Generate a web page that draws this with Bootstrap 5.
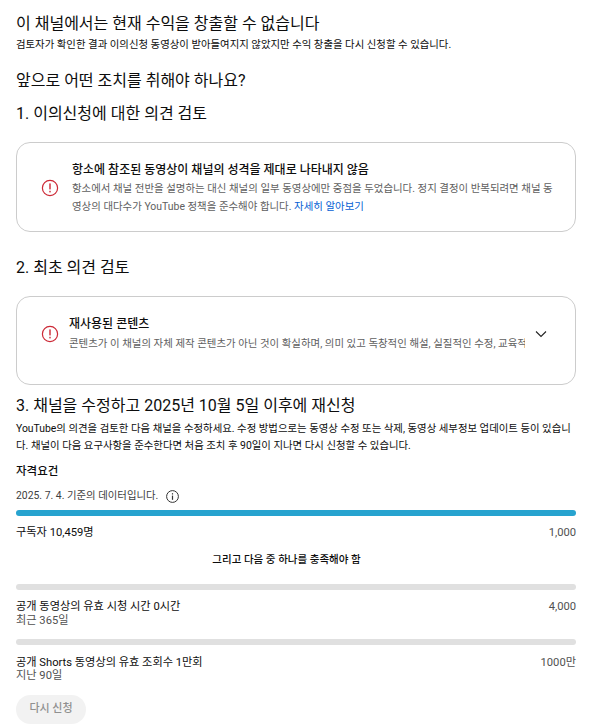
<!DOCTYPE html>
<html lang="ko">
<head>
<meta charset="utf-8">
<title>수익 창출</title>
<link href="https://cdn.jsdelivr.net/npm/bootstrap@5.3.0/dist/css/bootstrap.min.css" rel="stylesheet">
<style>
html,body{height:728px;overflow:hidden;background:#fff}
body{font-family:Roboto,"Noto Sans CJK KR",sans-serif;color:#0d0d0d;padding:13px 13px 0 16px;font-size:10.4px;line-height:16px}
.head-l{font-size:16px;line-height:22px;font-weight:400;margin:0}
.sub-t{font-size:10.4px;line-height:16px;margin:2px 0 0}
.para-t{font-size:10.4px;line-height:16.5px;margin:4px 0 0}
.m-next{margin-top:17px}
.m-one{margin-top:11px}
.m-two{margin-top:25px}
.m-three{margin-top:10px}
.rev-card{border:1px solid #ccc;border-radius:14px;background:#fff}
.card-a{height:90px;margin-top:17px;padding:2px 16px 0 24px}
.card-b{height:89px;margin-top:17px;padding:0 28px 14px 24px}
.card-t{font-size:12px;line-height:18px;font-weight:500;margin:0}
.card-d{color:#606060;font-size:10.45px;line-height:17.5px;margin:1px 0 0}
.card-d2{line-height:18px;margin-top:2px}
.clip-line{white-space:nowrap;overflow:hidden}
.ico-s{flex:0 0 18px;width:18px;height:18px}
.chev{flex:0 0 12px}
.gap-a{gap:13px}
.gap-b{gap:10px}
.body-b{min-width:0}
.link-b{color:#065fd4;text-decoration:none}
.bar-f{height:6px;border-radius:3px;background:#e0e0e0}
.bar-on{background:#27a3cf;margin-top:6px}
.bar-2{margin-top:16px}
.bar-3{margin-top:10px}
.label-b{font-size:11.5px;font-weight:500;line-height:18px;margin:8px 0 0}
.date-line{color:#404040;margin-top:8px;height:16px;gap:8px}
.muted-t{color:#505050}
.row-t{font-size:11.2px;line-height:15.5px}
.row-1{margin-top:9px}
.row-2{margin-top:9px}
.row-3{margin-top:10px}
.row-s{margin-top:-1px}
.row-s2{margin-top:-2px}
.row-c{font-size:10.5px;line-height:16px;font-weight:500;margin:11px 19px 0 0}
.retry{background:#f2f2f2;color:#909090;border:0;border-radius:15px;width:70px;height:29px;font-size:11px;font-weight:500;padding:0;margin-top:11px}
.retry:disabled{background:#f2f2f2;color:#909090;opacity:1}
</style>
</head>
<body>
<h1 class="head-l">이 채널에서는 현재 수익을 창출할 수 없습니다</h1>
<p class="sub-t">검토자가 확인한 결과 이의신청 동영상이 받아들여지지 않았지만 수익 창출을 다시 신청할 수 있습니다.</p>
<h2 class="head-l m-next">앞으로 어떤 조치를 취해야 하나요?</h2>
<h2 class="head-l m-one">1. 이의신청에 대한 의견 검토</h2>
<div class="rev-card card-a d-flex align-items-center gap-a">
  <svg class="ico-s" viewBox="0 0 18 18"><circle cx="9" cy="9" r="7.6" fill="none" stroke="#cc2936" stroke-width="1.2"/><rect x="8.3" y="4.4" width="1.4" height="6" fill="#cc2936"/><rect x="8.3" y="11.8" width="1.4" height="1.6" fill="#cc2936"/></svg>
  <div class="flex-grow-1">
    <p class="card-t">항소에 참조된 동영상이 채널의 성격을 제대로 나타내지 않음</p>
    <p class="card-d">항소에서 채널 전반을 설명하는 대신 채널의 일부 동영상에만 중점을 두었습니다. 정지 결정이 반복되려면 채널 동영상의 대다수가 YouTube 정책을 준수해야 합니다. <a class="link-b" href="#">자세히 알아보기</a></p>
  </div>
</div>
<h2 class="head-l m-two">2. 최초 의견 검토</h2>
<div class="rev-card card-b d-flex align-items-center gap-b">
  <svg class="ico-s" viewBox="0 0 18 18"><circle cx="9" cy="9" r="7.6" fill="none" stroke="#cc2936" stroke-width="1.2"/><rect x="8.3" y="4.4" width="1.4" height="6" fill="#cc2936"/><rect x="8.3" y="11.8" width="1.4" height="1.6" fill="#cc2936"/></svg>
  <div class="flex-grow-1 body-b">
    <p class="card-t">재사용된 콘텐츠</p>
    <p class="card-d card-d2 clip-line">콘텐츠가 이 채널의 자체 제작 콘텐츠가 아닌 것이 확실하며, 의미 있고 독창적인 해설, 실질적인 수정, 교육적 가치를 더하지 않았습니다.</p>
  </div>
  <svg class="chev" width="12" height="12" viewBox="0 0 12 12"><path d="M1 3.5 6 8.5 11 3.5" fill="none" stroke="#222" stroke-width="1.1"/></svg>
</div>
<h2 class="head-l m-three">3. 채널을 수정하고 2025년 10월 5일 이후에 재신청</h2>
<p class="para-t">YouTube의 의견을 검토한 다음 채널을 수정하세요. 수정 방법으로는 동영상 수정 또는 삭제, 동영상 세부정보 업데이트 등이 있습니다. 채널이 다음 요구사항을 준수한다면 처음 조치 후 90일이 지나면 다시 신청할 수 있습니다.</p>
<p class="label-b">자격요건</p>
<div class="d-flex align-items-center date-line">
  <span>2025. 7. 4. 기준의 데이터입니다.</span>
  <svg width="13" height="13" viewBox="0 0 13 13"><circle cx="6.5" cy="6.5" r="5.9" fill="none" stroke="#333" stroke-width="1"/><rect x="5.9" y="5.6" width="1.2" height="4.2" fill="#333"/><rect x="5.9" y="3.2" width="1.2" height="1.3" fill="#333"/></svg>
</div>
<div class="bar-f bar-on"></div>
<div class="d-flex justify-content-between row-t row-1"><span>구독자 10,459명</span><span class="muted-t">1,000</span></div>
<p class="text-center row-c">그리고 다음 중 하나를 충족해야 함</p>
<div class="bar-f bar-2"></div>
<div class="d-flex justify-content-between row-t row-2"><span>공개 동영상의 유효 시청 시간 0시간</span><span class="muted-t">4,000</span></div>
<div class="row-t muted-t row-s">최근 365일</div>
<div class="bar-f bar-3"></div>
<div class="d-flex justify-content-between row-t row-3"><span>공개 Shorts 동영상의 유효 조회수 1만회</span><span class="muted-t">1000만</span></div>
<div class="row-t muted-t row-s2">지난 90일</div>
<button class="btn retry d-block" disabled>다시 신청</button>
<script src="https://cdn.jsdelivr.net/npm/bootstrap@5.3.0/dist/js/bootstrap.bundle.min.js"></script>
</body>
</html>
